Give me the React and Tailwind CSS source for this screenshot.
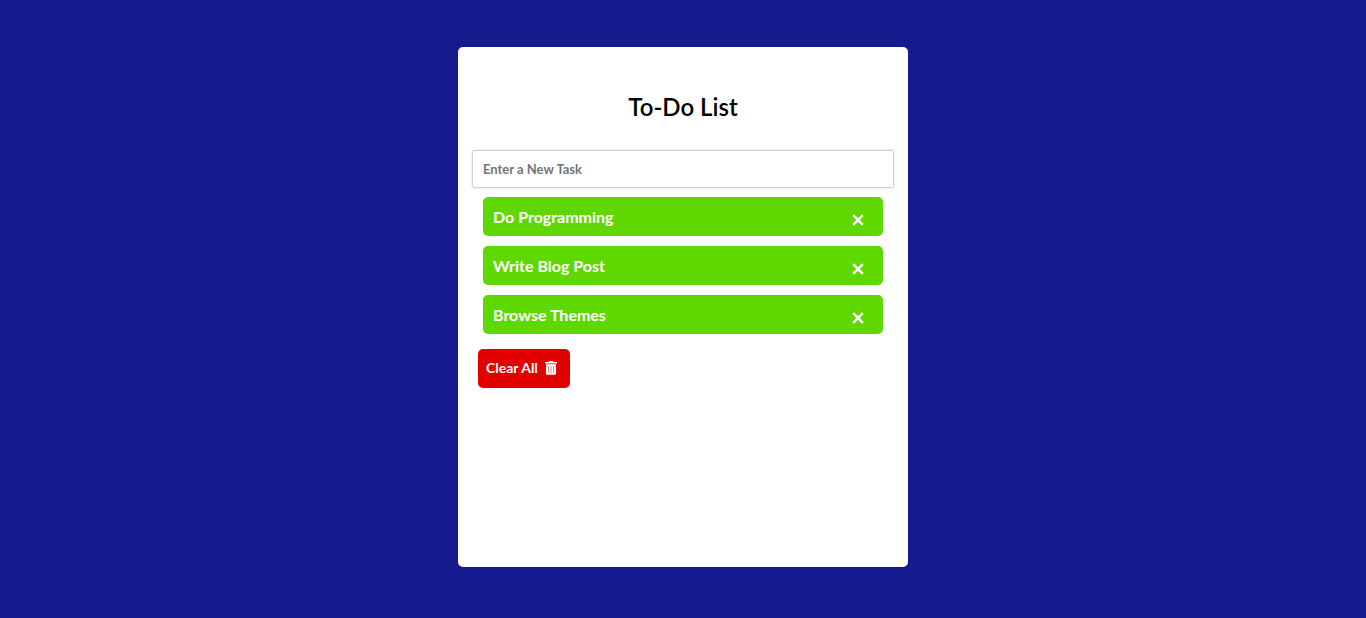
import { useState } from "react";

function CloseIcon() {
  return (
    <svg viewBox="0 0 16 16" className="size-4 fill-none stroke-white stroke-[2.5]" strokeLinecap="butt" aria-hidden="true">
      <path d="M3.200 3.200 12.800 12.800M12.800 3.200 3.200 12.800" />
    </svg>
  );
}

function TrashIcon() {
  return (
    <svg viewBox="0 0 12 14" className="h-[14px] w-[12px] fill-white" aria-hidden="true">
      <path fillRule="evenodd" d="M4.200 0h3.600l.7 1H11.600a.4.4 0 0 1 .4.4v.8a.4.4 0 0 1-.4.400H.4a.4.4 0 0 1-.4-.4v-.8A.4.4 0 0 1 .4 1H3.500zM1 3.300h10V12.500a1.300 1.300 0 0 1-1.300 1.300H2.300A1.300 1.300 0 0 1 1 12.500zM3.300 5.200v6.600h.5V5.200zM5.750 5.200v6.600h.5V5.200zM8.200 5.200v6.600h.5V5.200z" />
    </svg>
  );
}

export default function App() {
  const [tasks, setTasks] = useState(["Do Programming", "Write Blog Post", "Browse Themes"]);
  const [draft, setDraft] = useState("");

  function addTask(event) {
    event.preventDefault();
    if (draft.trim()) {
      setTasks([...tasks, draft.trim()]);
      setDraft("");
    }
  }

  return (
    <div className="flex min-h-screen flex-col items-center bg-[#151a8e] px-4 pt-[47px] pb-12 font-[Lato,sans-serif]">
      <main className="min-h-[520px] w-full max-w-[450px] rounded-[5px] bg-white px-[14px] pt-11">
        <h1 className="text-center text-2xl font-semibold text-black">To-Do List</h1>
        <form onSubmit={addTask} className="mt-[27px]">
          <input
            type="text"
            aria-label="Enter a New Task"
            placeholder="Enter a New Task"
            value={draft}
            onChange={(event) => setDraft(event.target.value)}
            className="block h-[38px] w-full rounded-[2px] border border-[#d2d2d2] px-[10px] text-[13px] font-bold text-black shadow-[0_0_2px_#00000033] placeholder:text-[#757575]"
          />
        </form>
        <ul className="mx-[11px] mt-[9px] flex flex-col gap-[10px]">
          {tasks.map((task, index) => (
            <li key={task} className="flex h-[39px] items-center justify-between rounded-[5px] bg-[#5fd800] pr-[17px] pl-[10px] text-base font-bold text-white">
              {task}
              <button type="button" aria-label={`Remove ${task}`} className="pt-[6px]" onClick={() => setTasks(tasks.filter((_, i) => i !== index))}>
                <CloseIcon />
              </button>
            </li>
          ))}
        </ul>
        <button type="button" onClick={() => setTasks([])} className="mt-[15px] ml-[6px] flex h-[39px] items-center gap-[7px] rounded-[5px] bg-[#e10000] pr-[13px] pb-[2px] pl-2 text-sm font-bold text-white">
          Clear All
          <TrashIcon />
        </button>
      </main>
    </div>
  );
}
